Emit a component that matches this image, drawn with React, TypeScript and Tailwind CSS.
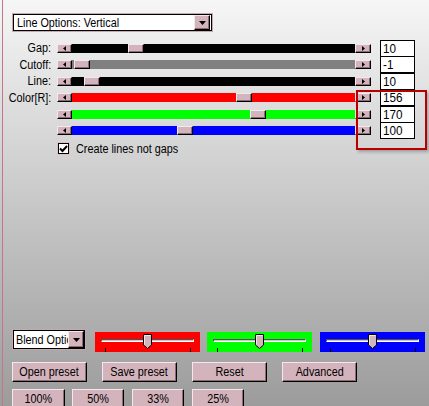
import React from "react";

const font = { fontFamily: '"Liberation Sans", Arial, sans-serif' };

function T({ children, origin = "origin-left" }: { children: React.ReactNode; origin?: string }) {
  return <span className={"inline-block whitespace-nowrap scale-x-[0.9] " + origin}>{children}</span>;
}

function Btn3D({ className = "", children }: { className?: string; children?: React.ReactNode }) {
  return (
    <div
      className={
        "bg-[#d4b4bc] border-t border-l border-t-[#f4e8ec] border-l-[#f4e8ec] border-b border-r border-b-black border-r-black shadow-[inset_-1px_-1px_0_#8c6c74] flex items-center justify-center " +
        className
      }
    >
      {children}
    </div>
  );
}

function Arrow({ dir }: { dir: "l" | "r" | "d" }) {
  if (dir === "d")
    return (
      <svg width="7" height="4" viewBox="0 0 7 4">
        <path d="M0 0H7L3.5 4Z" fill="black" />
      </svg>
    );
  return (
    <svg width="3" height="5" viewBox="0 0 3 5">
      {dir === "l" ? <path d="M3 0V5L0 2.5Z" fill="black" /> : <path d="M0 0V5L3 2.5Z" fill="black" />}
    </svg>
  );
}

type Row = { label: string; color: string; thumb: number; value: string };

const rows: Row[] = [
  { label: "Gap:", color: "bg-black", thumb: 56, value: "10" },
  { label: "Cutoff:", color: "bg-[#808080]", thumb: 2, value: "-1" },
  { label: "Line:", color: "bg-black", thumb: 12, value: "10" },
  { label: "Color[R]:", color: "bg-[#ff0000]", thumb: 164, value: "156" },
  { label: "", color: "bg-[#00ff00]", thumb: 178, value: "170" },
  { label: "", color: "bg-[#0000ff]", thumb: 105, value: "100" },
];

function SliderRow({ r }: { r: Row }) {
  return (
    <div className="flex items-center h-[16.5px]">
      <div className="w-[48px] text-right text-[12px] leading-none">
        {r.label && <T origin="origin-right">{r.label}</T>}
      </div>
      <div className="ml-[6px] flex items-center h-[9px]">
        <Btn3D className="w-[15px] h-[9px]">
          <Arrow dir="l" />
        </Btn3D>
        <div className={"relative w-[283px] h-[9px] " + r.color}>
          <div className="absolute top-0" style={{ left: r.thumb }}>
            <Btn3D className="w-[16px] h-[9px]" />
          </div>
        </div>
        <Btn3D className="w-[16px] h-[9px]">
          <Arrow dir="r" />
        </Btn3D>
      </div>
      <div className="ml-[9px] w-[35px] h-[17px] bg-white border border-black text-[13px] leading-none pl-[2px] flex items-center">
        <T>{r.value}</T>
      </div>
    </div>
  );
}

function ColorPanel({ color }: { color: string }) {
  return (
    <div className={"relative w-[105px] h-[20px] mt-[3px] " + color}>
      <div className="absolute left-[6px] top-[7px] w-[93px] h-[3px] border-t border-l border-[#505050] bg-[#c8c8c8] border-b border-r border-b-white border-r-white" />
      <div className="absolute left-[10px] top-[16px] w-px h-[4px] bg-black" />
      <div className="absolute left-[95px] top-[16px] w-px h-[4px] bg-black" />
      <svg className="absolute left-[48px] top-[2px]" width="9" height="15" viewBox="0 0 9 15">
        <path d="M0.5 0.5H8.5V11L4.5 14.5L0.5 11Z" fill="#d4b4bc" stroke="#000" strokeWidth="1" />
        <path d="M1.5 1.5H7.5M1.5 1.5V10.5" stroke="#f4e8ec" strokeWidth="1" fill="none" />
      </svg>
    </div>
  );
}

export default function App() {
  return (
    <div
      className="relative w-[429px] h-[406px] overflow-hidden bg-gradient-to-b from-[#f6f6f6] to-[#9c9c9c] pl-[2px] text-black"
      style={font}
    >
      <div className="h-full border-l border-[#c07888] flex flex-col">
        {/* top dropdown */}
        <div className="ml-[9px] mt-[13px] w-[201px] h-[20px] border border-[#c8a8b0] bg-white">
          <div className="h-full border border-black flex items-center justify-between">
            <span className="pl-[3px] text-[12px] leading-none">
              <T>Line Options: Vertical</T>
            </span>
            <Btn3D className="w-[16px] h-[15px] mr-[1px]">
              <Arrow dir="d" />
            </Btn3D>
          </div>
        </div>

        {/* slider rows */}
        <div className="mt-[8px] flex flex-col">
          {rows.map((r, i) => (
            <SliderRow key={i} r={r} />
          ))}
        </div>

        {/* checkbox */}
        <div className="mt-[3px] ml-[54px] flex items-center h-[13px]">
          <div className="w-[13px] h-[13px] bg-white border border-[#e0c0c8] flex items-center justify-center">
            <div className="w-[11px] h-[11px] border border-black flex items-center justify-center">
              <svg width="9" height="8" viewBox="0 0 9 8">
                <path d="M1 3.5L3.5 6L8 1" stroke="black" strokeWidth="2" fill="none" />
              </svg>
            </div>
          </div>
          <span className="ml-[6px] text-[12px] leading-none">
            <T>Create lines not gaps</T>
          </span>
        </div>

        {/* bottom panel */}
        <div className="mt-[174px] ml-[9px] flex items-start">
          <div className="w-[74px] h-[21px] border border-[#c8a8b0] bg-white">
            <div className="h-full border border-black flex items-center justify-between">
              <span className="pl-[2px] text-[12px] leading-none whitespace-nowrap overflow-hidden w-[54px]">
                <T>Blend Options</T>
              </span>
              <Btn3D className="w-[16px] h-[17px]">
                <Arrow dir="d" />
              </Btn3D>
            </div>
          </div>
          <div className="ml-[9px]">
            <ColorPanel color="bg-[#ff0000]" />
          </div>
          <div className="ml-[7px]">
            <ColorPanel color="bg-[#00ff00]" />
          </div>
          <div className="ml-[8px]">
            <ColorPanel color="bg-[#0000ff]" />
          </div>
        </div>

        <div className="mt-[10px] ml-[9px] flex gap-[15px] text-[12px] leading-none">
          <Btn3D className="w-[75px] h-[20px]"><T origin="origin-center">Open preset</T></Btn3D>
          <Btn3D className="w-[75px] h-[20px]"><T origin="origin-center">Save preset</T></Btn3D>
          <Btn3D className="w-[75px] h-[20px]"><T origin="origin-center">Reset</T></Btn3D>
          <Btn3D className="w-[75px] h-[20px]"><T origin="origin-center">Advanced</T></Btn3D>
        </div>

        <div className="mt-[7px] ml-[9px] flex text-[12px] leading-none">
          <Btn3D className="w-[53px] h-[20px]"><T origin="origin-center">100%</T></Btn3D>
          <Btn3D className="ml-[7px] w-[52px] h-[20px]"><T origin="origin-center">50%</T></Btn3D>
          <Btn3D className="ml-[8px] w-[52px] h-[20px]"><T origin="origin-center">33%</T></Btn3D>
          <Btn3D className="ml-[8px] w-[52px] h-[20px]"><T origin="origin-center">25%</T></Btn3D>
        </div>
      </div>

      {/* red highlight rectangle */}
      <div className="absolute left-[356px] top-[90px] w-[71px] h-[60px] border-2 border-[#b80000] shadow-[2px_2px_3px_rgba(0,0,0,0.25)]" />
    </div>
  );
}
